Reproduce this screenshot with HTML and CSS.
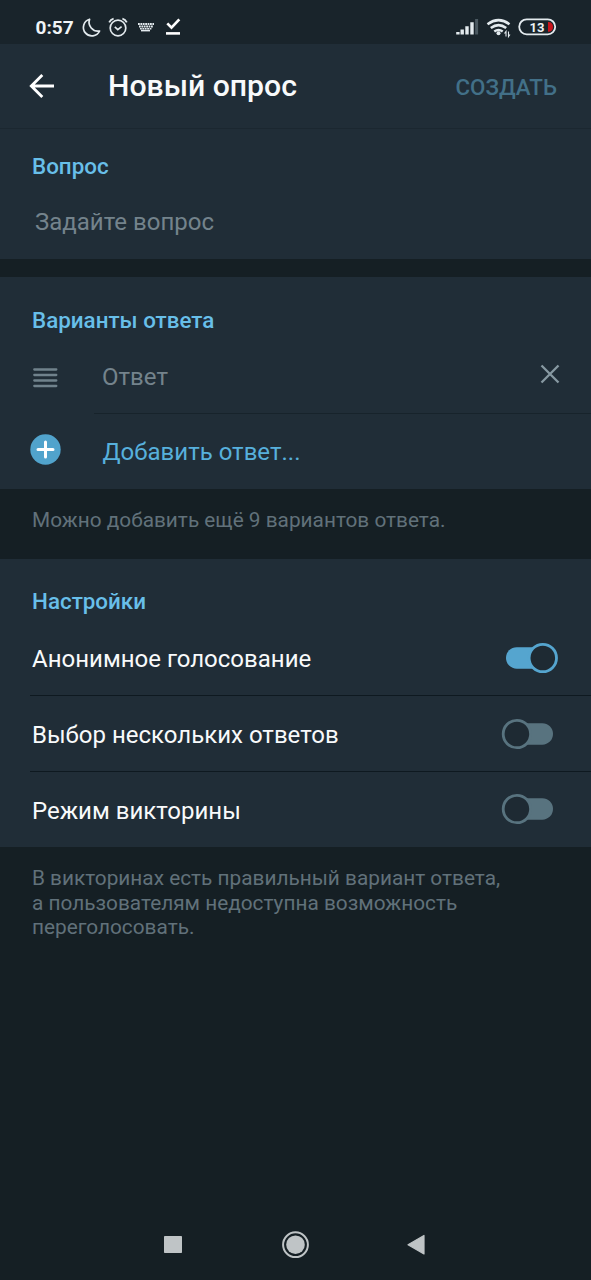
FILE: index.html
```html
<!DOCTYPE html>
<html lang="ru">
<head>
<meta charset="utf-8">
<title>Новый опрос</title>
<link rel="stylesheet" href="styles.css">
</head>
<body>
<div class="status">
  <span class="clock">0:57</span>
  <svg class="status-left" width="110" height="44" viewBox="78 0 110 44" fill="none" stroke="#e3eaee">
    <path d="M89.6 19.2A8.5 8.5 0 1 0 99.6 31A9 9 0 0 1 89.6 19.2Z" stroke-width="1.7" stroke-linejoin="round"/>
    <circle cx="118" cy="28" r="7.8" stroke-width="1.7"/>
    <path d="M114.8 26.8L117.8 29.6L121.6 26.6" stroke-width="1.6"/>
    <path d="M109.2 22.4Q110.6 19.4 113.6 18.6M126.8 22.4Q125.4 19.4 122.4 18.6" stroke-width="1.8"/>
    <path d="M138 24H154M139 26.5H153" stroke-width="2" stroke-dasharray="1.8 .6"/>
    <path d="M140 28.7H152" stroke-width="1.4" stroke-dasharray="1.8 .6"/>
    <path d="M141 30.6H150" stroke-width="1.6"/>
    <path d="M167.3 23.4L171.5 27.6L179.3 19.4" stroke="#fff" stroke-width="2.7"/>
    <path d="M166 33.4H180" stroke="#fff" stroke-width="2.6"/>
  </svg>
  <svg class="status-right" width="106" height="44" viewBox="453 0 106 44" fill="none" stroke="#e3eaee">
    <g stroke-width="3.4">
      <path d="M457.9 34.5V32M462.2 34.5V29.4M467 34.5V26.3M472 34.5V22.2"/>
      <path d="M476.6 34.5V19" stroke="#4b5961" stroke-width="3"/>
    </g>
    <path d="M487.5 24.2Q498.5 16.2 509.5 24.2M490.8 28Q498.5 22.4 506.2 28M494.3 31.5Q498.5 28.6 502.7 31.5" stroke-width="2.6"/>
    <circle cx="498.5" cy="33.2" r="2" fill="#e3eaee" stroke="none"/>
    <path d="M506 36.5V31.5L504.5 33.5M508.5 31.5V36.5L510 34.5" stroke-width="1.1"/>
    <path d="M548 22H549A5 5 0 0 1 549 31.8H548Z" fill="#c9141b" stroke="none"/>
    <rect x="519.2" y="19.3" width="36" height="15" rx="7.5" stroke-width="1.8"/>
    <text class="battery" x="537" y="31.6" text-anchor="middle" stroke="none">13</text>
  </svg>
</div>

<header class="bar">
  <svg class="back" width="26" height="26" viewBox="0 0 26 26" fill="none" stroke="#fff" stroke-width="2.8"><path d="M25 13H2.5M13.3 2L2.3 13L13.3 24"/></svg>
  <h1 class="title">Новый опрос</h1>
  <span class="create">СОЗДАТЬ</span>
</header>

<section class="card question">
  <h2 class="heading">Вопрос</h2>
  <div class="row input"><span class="hint ask">Задайте вопрос</span></div>
</section>

<section class="card answers">
  <h2 class="heading variants">Варианты ответа</h2>
  <div class="row answer">
    <svg class="drag" width="25" height="20" viewBox="0 0 25 20" stroke="#70828c" stroke-width="2.3" stroke-linecap="round"><path d="M1.3 1.5H23.3M1.3 7H23.3M1.3 12.5H23.3M1.3 18H23.3"/></svg>
    <span class="hint reply">Ответ</span>
    <svg class="remove" width="20" height="20" viewBox="0 0 20 20" stroke="#8799a2" stroke-width="2.3"><path d="M1.5 1.5L18.5 18.5M18.5 1.5L1.5 18.5"/></svg>
  </div>
  <div class="row add">
    <svg class="plus" width="31" height="31" viewBox="0 0 31 31"><circle cx="15.5" cy="15.5" r="15.2" fill="#51a3cc"/><path d="M15.5 8V23M8 15.5H23" stroke="#fff" stroke-width="3" stroke-linecap="round"/></svg>
    <span class="link">Добавить ответ...</span>
  </div>
</section>
<p class="note limit">Можно добавить ещё 9 вариантов ответа.</p>

<section class="card settings">
  <h2 class="heading setup">Настройки</h2>
  <div class="row option first"><span class="anon">Анонимное голосование</span>
    <svg class="switch" width="58" height="32" viewBox="501 0 58 32"><rect x="506" y="5.2" width="47" height="21.5" rx="10.7" fill="#55a5cf"/><circle cx="542.8" cy="16" r="13.7" fill="#1e2a33" stroke="#55a5cf" stroke-width="2.8"/></svg>
  </div>
  <div class="row option"><span class="multi">Выбор нескольких ответов</span>
    <svg class="switch" width="58" height="32" viewBox="501 0 58 32"><rect x="506" y="5.2" width="47" height="21.5" rx="10.7" fill="#58737f"/><circle cx="516.9" cy="16" r="13.7" fill="#1e2a33" stroke="#58737f" stroke-width="2.8"/></svg>
  </div>
  <div class="row option last"><span class="quiz">Режим викторины</span>
    <svg class="switch" width="58" height="32" viewBox="501 0 58 32"><rect x="506" y="5.2" width="47" height="21.5" rx="10.7" fill="#58737f"/><circle cx="516.9" cy="16" r="13.7" fill="#1e2a33" stroke="#58737f" stroke-width="2.8"/></svg>
  </div>
</section>
<p class="note quiz-note">В викторинах есть правильный вариант ответа,<br>а пользователям недоступна возможность<br>переголосовать.</p>

<nav class="nav">
  <svg width="591" height="70" viewBox="0 1210 591 70" fill="#bfc4c6">
    <rect x="164" y="1236" width="18" height="17" rx=".7"/>
    <circle cx="295.5" cy="1244.7" r="9.3"/>
    <circle cx="295.5" cy="1244.7" r="12.4" fill="none" stroke="#bfc4c6" stroke-width="2"/>
    <path d="M424 1235.5V1254L408 1244.8Z" stroke="#bfc4c6" stroke-width="1.2" stroke-linejoin="round"/>
  </svg>
</nav>
</body>
</html>
```
FILE: styles.css
```css
* { box-sizing: border-box; }
body {
  margin: 0;
  width: 591px;
  height: 1280px;
  overflow: hidden;
  display: flex;
  flex-direction: column;
  background: #151f24;
  color: #f8fafb;
  font-family: Roboto, "Noto Sans", sans-serif;
  font-size: 24px;
  line-height: 28px;
}
h1, h2, p { margin: 0; }
svg { display: block; flex: none; }
span, h1, h2, p { white-space: nowrap; }

.status { height: 44px; display: flex; background: #19242b; }
.clock { width: 78px; padding: 14px 0 0 35.5px; font-size: 19px; font-weight: 700; color: #f0f4f6; }
.status-right { margin-left: 265px; }
.battery { font-size: 13px; font-weight: 700; fill: #f0f4f6; }

.bar {
  height: 85px;
  display: flex;
  align-items: center;
  padding: 0 34px 0 29px;
  background: #202d37;
  border-bottom: 1px solid #1b2730;
}
.title { margin-left: 53px; font-size: 30.2px; font-weight: 500; line-height: 34px; }
.create { margin-left: auto; padding-top: 1px; font-size: 22.3px; font-weight: 500; color: #427088; }

.card { background: #202d37; }
.heading {
  padding-left: 32px;
  font-size: 22.4px;
  font-weight: 500;
  line-height: 40px;
  color: #68bfe9;
}
.row { display: flex; align-items: center; }
.hint { color: #74838c; }

.question { height: 130px; padding-top: 17px; }
.input { height: 72px; padding-left: 35px; }

.answers { height: 212px; margin-top: 18px; padding-top: 23px; }
.answer { height: 73px; padding: 0 31px 0 33px; }
.drag { margin-top: 2px; }
.reply { margin: 0 0 0 44px; }
.remove { margin: 0 0 5px auto; }
.add { height: 76px; padding-left: 30px; position: relative; }
.add::before {
  content: "";
  position: absolute;
  top: 0;
  left: 94px;
  right: 0;
  height: 1px;
  background: #17232b;
}
.plus { margin-bottom: 4px; }
.link { margin: 2px 0 0 41.5px; color: #57b0dc; }

.note { padding-left: 32px; font-size: 20.8px; line-height: 24.7px; color: #61717a; }
.limit { height: 70px; padding-top: 19px; }

.settings { height: 288px; padding-top: 22px; }
.option {
  height: 76px;
  margin-left: 30px;
  padding: 3px 32px 0 2px;
  justify-content: space-between;
  border-bottom: 1px solid #0e1920;
}
.first { height: 75px; padding-top: 2px; }
.last { height: 75px; padding-top: 2px; border-bottom: 0; }
.switch { margin-bottom: 3px; }
.quiz-note { padding-top: 19px; }

.nav { margin-top: auto; }
```
